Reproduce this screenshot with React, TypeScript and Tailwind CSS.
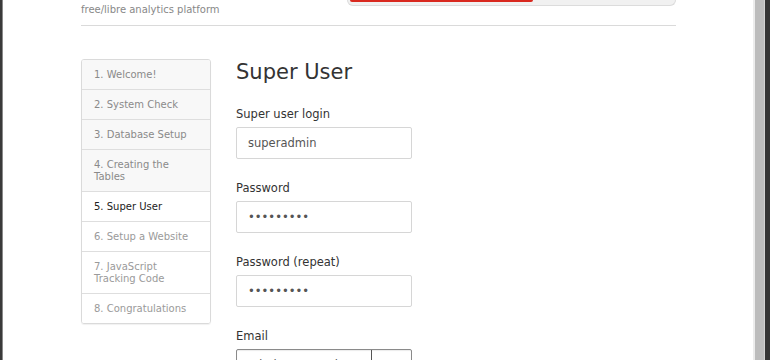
import React from "react";

const steps = [
  { label: "1. Welcome!", done: true },
  { label: "2. System Check", done: true },
  { label: "3. Database Setup", done: true },
  { label: "4. Creating the Tables", done: true },
  { label: "5. Super User", current: true },
  { label: "6. Setup a Website" },
  { label: "7. JavaScript Tracking Code" },
  { label: "8. Congratulations" },
];

function Field({ label, value, focused }: { label: string; value: string; focused?: boolean }) {
  return (
    <div className="flex flex-col">
      <div className="text-[11.5px] leading-[16px] text-[#333]">{label}</div>
      <div
        className={
          "mt-[5px] h-[32px] w-[176px] rounded-[2px] border bg-white px-[11px] text-[11.5px] leading-[30px] text-[#555] " +
          (focused ? "border-[#8a8a8a] shadow-[inset_0_1px_1px_rgba(0,0,0,0.08)]" : "border-[#d6d6d6]")
        }
      >
        {value}
      </div>
    </div>
  );
}

export default function App() {
  return (
    <div
      className="flex h-[360px] w-[770px] overflow-hidden bg-white"
      style={{ fontFamily: '"DejaVu Sans", Verdana, sans-serif' }}
    >
      <div className="flex h-full w-[3px] shrink-0">
        <div className="h-full w-[2px] bg-[#3a3a3a]" />
        <div className="h-full w-px bg-[#8a8a8a]" />
      </div>
      <div className="relative h-full flex-1 overflow-hidden pl-[78px]">
        <div className="w-[595px]">
          <div className="flex items-start justify-between">
            <div className="text-[10px] leading-[20px] text-[#888]">free/libre analytics platform</div>
            <div className="h-[6px] w-[329px] rounded-b-[6px] border border-t-0 border-[#dcdcdc] bg-[#f1f1f1] pl-[2px]">
              <div className="h-[2px] w-[183px] rounded-br-[3px] rounded-bl-[3px] bg-[#d9291f]" />
            </div>
          </div>
          <div className="mt-[5px] h-px bg-[#dadada]" />
          <div className="mt-[33px] flex items-start gap-[25px]">
            <div className="w-[130px] shrink-0 overflow-hidden rounded-[3px] border border-[#dadada] shadow-[0_1px_1px_rgba(0,0,0,0.06)]">
              {steps.map((s, i) => (
                <div
                  key={i}
                  className={
                    "px-[12px] py-[8.5px] text-[10px] leading-[12px] " +
                    (i > 0 ? "border-t border-[#dedede] " : "") +
                    (s.done
                      ? "bg-[#f8f8f8] text-[#8a8a8a]"
                      : s.current
                      ? "bg-white text-[#222]"
                      : "bg-white text-[#9a9a9a]")
                  }
                >
                  {s.label}
                </div>
              ))}
            </div>
            <div className="flex flex-col">
              <h1 className="-mt-[1px] text-[21px] leading-[28px] text-[#333]">Super User</h1>
              <div className="mt-[20px] flex flex-col gap-[21px]">
                <Field label="Super user login" value="superadmin" />
                <Field label="Password" value="•••••••••" />
                <Field label="Password (repeat)" value="•••••••••" />
                <Field label="Email" value="admin@example.org" focused />
              </div>
            </div>
          </div>
        </div>
        <div className="absolute left-[368px] top-[350px] h-[12px] w-px bg-[#555]" />
      </div>
      <div className="flex h-full w-[17px] shrink-0">
        <div className="h-full w-[2px] bg-[#ececec]" />
        <div className="h-full w-[9px] bg-[#bcbcbc]" />
        <div className="h-full w-px bg-[#d0d0d0]" />
        <div className="h-full w-[5px] bg-[#333]" />
      </div>
    </div>
  );
}
